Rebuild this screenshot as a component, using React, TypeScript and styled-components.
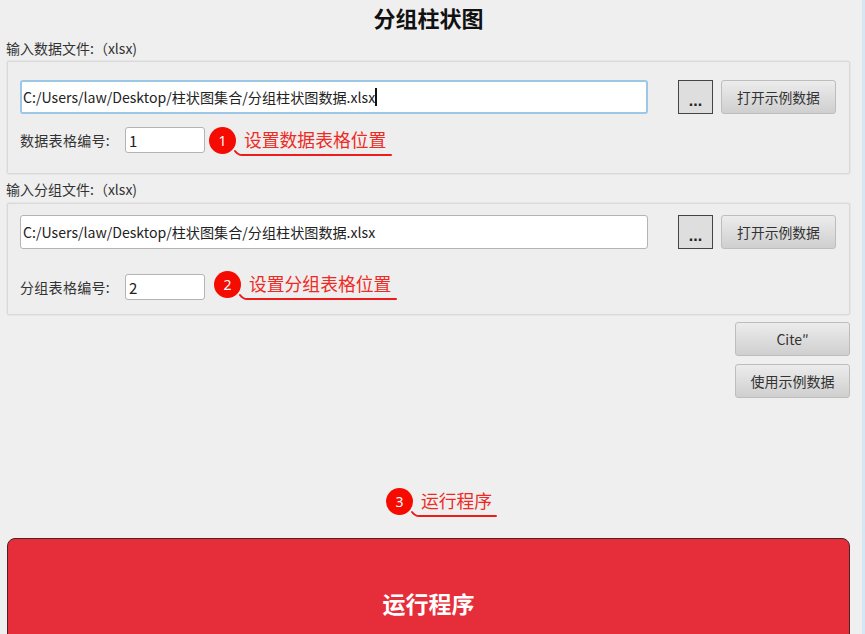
import React from "react";
import styled, { createGlobalStyle } from "styled-components";

const Global = createGlobalStyle`
  html, body { margin: 0; padding: 0; background: #efefef; }
  body { font-family: "Noto Sans CJK SC", "Noto Sans", sans-serif; color: #222; }
`;

const Page = styled.div`
  width: 865px;
  height: 634px;
  box-sizing: border-box;
  overflow: hidden;
  background: #efefef;
  border-right: 3px solid #d6e6f2;
  padding: 0 12px 0 7px;
  display: flex;
  flex-direction: column;
  & > * { flex: none; }
`;

const Title = styled.h1`
  margin: 0;
  height: 40px;
  line-height: 40px;
  font-size: 22px;
  font-weight: 700;
  color: #111;
  text-align: center;
  position: relative;
  top: -3px;
`;

const SectionLabel = styled.div<{ $height: number }>`
  height: ${(p) => p.$height}px;
  line-height: 16px;
  font-size: 14px;
  color: #333;
  margin-left: -1px;
`;

const Panel = styled.section<{ $height: number; $top: number; $rowGap: number }>`
  box-sizing: border-box;
  height: ${(p) => p.$height}px;
  border: 1px solid #d9d9d9;
  box-shadow: 0 0 0 1px #e6e6e6;
  border-radius: 2px;
  background: #eeeeee;
  padding: ${(p) => p.$top}px 13px 0 12px;
  display: flex;
  flex-direction: column;
  gap: ${(p) => p.$rowGap}px;
  margin-bottom: 7px;
`;

const Row = styled.div`
  display: flex;
  align-items: center;
`;

const PathField = styled.div<{ $focused?: boolean }>`
  box-sizing: border-box;
  width: 628px;
  height: 34px;
  padding-left: ${(p) => (p.$focused ? 1 : 2)}px;
  background: #fff;
  border: ${(p) => (p.$focused ? "2px solid #9cc8e6" : "1px solid #b4b4b4")};
  border-radius: 3px;
  font-size: 14.12px;
  color: #222;
  white-space: nowrap;
  display: flex;
  align-items: center;
`;

const Caret = styled.span`
  display: inline-block;
  width: 1.5px;
  height: 18px;
  background: #111;
`;

const BrowseButton = styled.button`
  box-sizing: border-box;
  width: 35px;
  height: 34px;
  margin-left: 30px;
  padding: 8px 0 0;
  border: 1.5px solid #444;
  background: #dedede;
  font: 700 16px "Liberation Sans", sans-serif;
  color: #222;
  line-height: 1;
`;

const GreyButton = styled.button`
  box-sizing: border-box;
  width: 115px;
  height: 34px;
  border: 1px solid #bdbdbd;
  border-radius: 3px;
  background: linear-gradient(#ececec, #cfcfcf);
  font-family: "Noto Sans CJK SC", sans-serif;
  font-size: 13.8px;
  color: #333;
  padding: 0;
`;

const OpenButton = styled(GreyButton)`
  margin-left: 8px;
`;

const FieldLabel = styled.span`
  width: 105px;
  font-size: 14px;
  letter-spacing: 0.3px;
  color: #333;
`;

const NumberField = styled.div`
  box-sizing: border-box;
  width: 80px;
  height: 26px;
  line-height: 25px;
  padding-left: 3px;
  background: #fff;
  border: 1px solid #b4b4b4;
  border-radius: 3px;
  font-size: 15px;
  color: #222;
`;

const Note = styled.div<{ $offset: number; $lift: number; $lineWidth: number }>`
  display: flex;
  align-items: center;
  gap: 8px;
  height: 26px;
  margin-left: ${(p) => p.$offset}px;
  position: relative;
  top: ${(p) => p.$lift}px;
  flex: none;
  width: ${(p) => p.$lineWidth + 26}px;
`;

const Badge = styled.span`
  flex: none;
  width: 27px;
  height: 27px;
  border-radius: 50%;
  background: #f50b00;
  color: #fff;
  font: 400 14px/27px "Noto Sans", sans-serif;
  text-align: center;
`;

const NoteText = styled.span`
  font-size: 17.8px;
  line-height: 24px;
  padding-bottom: 2px;
  color: #ee2a25;
  white-space: nowrap;
`;

const Underline = styled.svg`
  position: absolute;
  left: 25px;
  top: 24px;
  overflow: visible;
`;

const Actions = styled.div`
  display: flex;
  flex-direction: column;
  align-items: flex-end;
  gap: 8px;
`;

const ActionButton = styled(GreyButton)`
  font-size: 14px;
`;

const NoteSlot = styled.div`
  height: 140px;
  box-sizing: border-box;
  padding: 90px 0 0 379px;
`;

const RunButton = styled.button`
  box-sizing: border-box;
  height: 140px;
  border: 1px solid #4a2226;
  border-radius: 8px;
  background: #e62e3a;
  color: #fff;
  font-family: "Noto Sans CJK SC", sans-serif;
  font-size: 23px;
  font-weight: 700;
  padding: 0 0 10px;
`;

const Callout = ({ n, text, offset, lift, lineWidth }: { n: number; text: string; offset: number; lift: number; lineWidth: number }) => (
  <Note $offset={offset} $lift={lift} $lineWidth={lineWidth}>
    <Badge>{n}</Badge>
    <NoteText>{text}</NoteText>
    <Underline width={lineWidth} height={6}>
      <path d={`M1 0 Q4 4 8 4 H${lineWidth}`} fill="none" stroke="#ec1c1c" strokeWidth="2" strokeLinecap="round" />
    </Underline>
  </Note>
);

const PATH = "C:/Users/law/Desktop/柱状图集合/分组柱状图数据.xlsx";

export default function App() {
  return (
    <Page>
      <Global />
      <Title>分组柱状图</Title>
      <SectionLabel $height={21}>输入数据文件:（xlsx)</SectionLabel>
      <Panel $height={113} $top={18} $rowGap={13}>
        <Row>
          <PathField $focused>{PATH}<Caret /></PathField>
          <BrowseButton>...</BrowseButton>
          <OpenButton>打开示例数据</OpenButton>
        </Row>
        <Row>
          <FieldLabel>数据表格编号:</FieldLabel>
          <NumberField>1</NumberField>
          <Callout n={1} text="设置数据表格位置" offset={4} lift={0} lineWidth={157} />
        </Row>
      </Panel>
      <SectionLabel $height={22}>输入分组文件:（xlsx)</SectionLabel>
      <Panel $height={112} $top={11} $rowGap={25}>
        <Row>
          <PathField>{PATH}</PathField>
          <BrowseButton>...</BrowseButton>
          <OpenButton>打开示例数据</OpenButton>
        </Row>
        <Row>
          <FieldLabel>分组表格编号:</FieldLabel>
          <NumberField>2</NumberField>
          <Callout n={2} text="设置分组表格位置" offset={9} lift={-3} lineWidth={157} />
        </Row>
      </Panel>
      <Actions>
        <ActionButton>Cite″</ActionButton>
        <ActionButton>使用示例数据</ActionButton>
      </Actions>
      <NoteSlot>
        <Callout n={3} text="运行程序" offset={0} lift={0} lineWidth={85} />
      </NoteSlot>
      <RunButton>运行程序</RunButton>
    </Page>
  );
}
